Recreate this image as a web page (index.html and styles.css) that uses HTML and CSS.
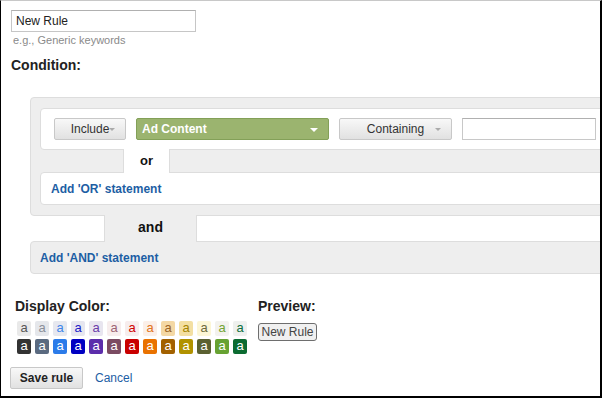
FILE: index.html
```html
<!DOCTYPE html>
<html lang="en">
<head>
  <meta charset="UTF-8" />
  <title>New Rule</title>
  <link rel="stylesheet" href="styles.css">
</head>
<body>
  <div class="frame">
    <input class="rule-name" type="text" value="New Rule">
    <div class="hint">e.g., Generic keywords</div>
    <div class="title">Condition:</div>

    <div class="and-group">
      <div class="or-group">
        <div class="stmt">
          <button class="btn dd include">Include<span class="caret"></span></button>
          <button class="green">Ad Content<span class="caret white"></span></button>
          <button class="btn dd containing">Containing<span class="caret"></span></button>
          <input class="value" type="text">
        </div>
        <div class="join or-join"><span class="tab">or</span></div>
        <div class="stmt add-or"><a href="#">Add 'OR' statement</a></div>
      </div>
      <div class="join and-join"><span class="tab">and</span></div>
      <div class="add-and"><a href="#">Add 'AND' statement</a></div>
    </div>

    <div class="display">
      <div class="colors">
        <div class="title">Display Color:</div>
        <div class="swatches" id="swatches"></div>
      </div>
      <div class="preview">
        <div class="title">Preview:</div>
        <button class="preview-btn">New Rule</button>
      </div>
    </div>

    <div class="actions">
      <button class="btn save">Save rule</button>
      <a href="#" class="cancel">Cancel</a>
    </div>
  </div>

  <script>
    // [background, letter]
    const light = [
      ["#e9e9e9", "#555"], ["#e5e7eb", "#8a8f99"], ["#e6e8ef", "#3f86ea"],
      ["#e6e6ef", "#1a1ac8"], ["#e8e5ef", "#6a3aaa"], ["#f7eded", "#9c6474"],
      ["#f7eded", "#d00000"], ["#fbefe8", "#e27420"], ["#f4d8a4", "#9b6424"],
      ["#f3dfa2", "#a38400"], ["#fcf6d6", "#6c6a3c"], ["#f3f2ee", "#72a432"],
      ["#eef0ee", "#0f7040"]
    ];
    const dark = [
      "#333333", "#5a6a80", "#2b7be9", "#0000c2", "#5c2dab", "#7b4b62",
      "#c90000", "#e97200", "#a26100", "#b19200", "#5b6131", "#67a232", "#0b6b31"
    ];
    const box = document.getElementById("swatches");
    light.forEach(c => {
      const s = document.createElement("span");
      s.className = "swatch";
      s.textContent = "a";
      s.style.background = c[0];
      s.style.color = c[1];
      box.appendChild(s);
    });
    dark.forEach(c => {
      const s = document.createElement("span");
      s.className = "swatch";
      s.textContent = "a";
      s.style.background = c;
      s.style.color = "#fff";
      box.appendChild(s);
    });
  </script>
</body>
</html>
```

FILE: styles.css
```css
* {
  box-sizing: border-box;
}
body {
  margin: 0;
  font-family: "Liberation Sans", Arial, sans-serif;
  font-size: 12px;
  color: #222;
}
.frame {
  width: 602px;
  height: 398px;
  border-top: 1px solid #c8c8c8;
  border-left: 1px solid #000;
  border-right: 2px solid #000;
  border-bottom: 2px solid #000;
  padding: 9px 0 0 9px;
  overflow: hidden;
  background: #fff;
}
.rule-name {
  display: block;
  width: 185px;
  height: 22px;
  margin-left: 1px;
  padding: 0 4px;
  border: 1px solid #c6c6c6;
  border-top-color: #b0b0b0;
  font-family: inherit;
  font-size: 12px;
  color: #222;
}
.hint {
  margin: 2px 0 0 3px;
  font-size: 11px;
  line-height: 13px;
  color: #8a8a8a;
}
.title {
  font-size: 14px;
  font-weight: bold;
  line-height: 16px;
  color: #222;
}
.frame > .title {
  margin: 10px 0 0 1px;
}
a {
  color: #1d5ea4;
  text-decoration: none;
}

/* condition builder */
.and-group {
  margin: 24px -40px 0 20px;
}
.or-group {
  background: #eee;
  border: 1px solid #ddd;
  border-radius: 4px;
  padding: 10px 0 10px 9px;
}
.stmt {
  display: flex;
  align-items: center;
  gap: 10px;
  background: #fff;
  border: 1px solid #ddd;
  border-radius: 4px;
  padding: 9px 13px;
}
.join {
  display: flex;
  margin: -1px 0;
}
.join .tab {
  position: relative;
  text-align: center;
  font-weight: bold;
  border-left: 1px solid #ddd;
  border-right: 1px solid #ddd;
  color: #111;
}
.or-join .tab {
  margin-left: 83px;
  width: 47px;
  height: 24px;
  line-height: 23px;
  font-size: 13px;
  background: #fff;
}
.and-join .tab {
  margin-left: 74px;
  width: 93px;
  height: 27px;
  line-height: 25px;
  font-size: 14px;
  background: #eee;
}
.add-or {
  height: 33px;
  padding: 0 10px;
}
.add-or a, .add-and a {
  font-weight: bold;
}
.add-and {
  display: flex;
  align-items: center;
  height: 33px;
  padding: 0 9px;
  background: #eee;
  border: 1px solid #ddd;
  border-radius: 4px;
}

/* buttons */
.btn {
  height: 22px;
  background: linear-gradient(#f8f8f8, #e1e1e1);
  border: 1px solid #c8c8c8;
  border-radius: 2px;
  font-family: inherit;
  font-size: 12px;
  color: #333;
  padding: 0;
}
.dd {
  position: relative;
  flex: none;
}
.include {
  width: 72px;
}
.containing {
  width: 113px;
}
.caret {
  position: absolute;
  right: 10px;
  top: 9px;
  width: 0;
  height: 0;
  border-left: 3px solid transparent;
  border-right: 3px solid transparent;
  border-top: 3px solid #aaa;
}
.green {
  position: relative;
  flex: none;
  width: 193px;
  height: 22px;
  padding: 0 0 0 5px;
  text-align: left;
  background: #9bb46f;
  border: 1px solid #83a058;
  border-radius: 2px;
  font-family: inherit;
  font-size: 12px;
  font-weight: bold;
  color: #fff;
}
.caret.white {
  right: 10px;
  border-left-width: 4px;
  border-right-width: 4px;
  border-top: 4px solid #fff;
}
.value {
  flex: none;
  width: 134px;
  height: 22px;
  border: 1px solid #c8c8c8;
  border-top-color: #b0b0b0;
}

/* display color */
.display {
  display: flex;
  gap: 0;
  margin-top: 24px;
}
.colors {
  width: 247px;
  padding-left: 5px;
}
.swatches {
  display: grid;
  grid-template-columns: repeat(13, 14px);
  column-gap: 4px;
  row-gap: 3px;
  margin: 7px 0 0 2px;
}
.swatch {
  height: 15px;
  border-radius: 2px;
  text-align: center;
  font-size: 13px;
  line-height: 14px;
}
.preview .title {
  margin-left: 1px;
}
.preview-btn {
  display: block;
  margin: 9px 0 0 1px;
  width: 59px;
  height: 18px;
  padding: 0;
  background: #f0f0f0;
  border: 1px solid #6e6e6e;
  border-radius: 3px;
  font-family: inherit;
  font-size: 12px;
  color: #444;
}

.actions {
  display: flex;
  align-items: center;
  gap: 12px;
  margin-top: 13px;
}
.save {
  width: 73px;
  font-weight: bold;
  color: #222;
}
.cancel {
  font-size: 12px;
}
```
